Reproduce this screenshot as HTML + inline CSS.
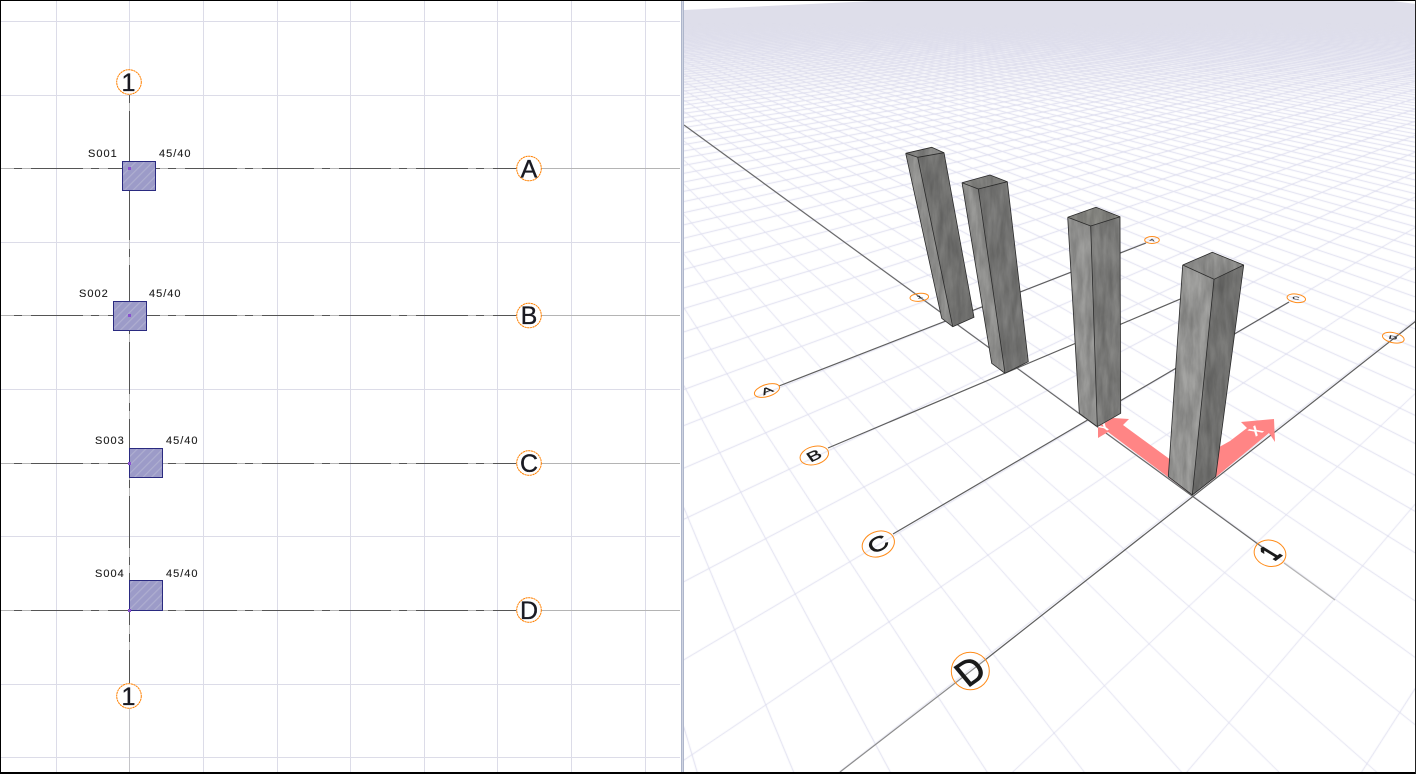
<!DOCTYPE html>
<html>
<head>
<meta charset="utf-8">
<style>
html,body{margin:0;padding:0;background:#fff;width:1416px;height:774px;overflow:hidden}
#c{position:absolute;left:684px;top:1px}
svg{position:absolute;left:0;top:0}
text{font-family:"Liberation Sans",sans-serif}
.t{font-size:11px;letter-spacing:1px;fill:#1c1c1c;stroke:#1c1c1c;stroke-width:.12}
.l{font-size:25px;fill:#1a1a22;stroke:#1a1a22;stroke-width:.35;text-anchor:middle}
.g{font-size:20px;fill:#1a1a1a;stroke:#1a1a1a;stroke-width:.5;text-anchor:middle}
</style>
</head>
<body>
<canvas id="c" width="731" height="771"></canvas>
<svg width="1416" height="774" viewBox="0 0 1416 774">
<defs>
<pattern id="h" width="6" height="6" patternUnits="userSpaceOnUse" patternTransform="rotate(45)">
<rect width="6" height="6" fill="#9c9bc8"/>
<rect width="1.2" height="6" fill="#aeaed0"/>
</pattern>
<filter id="n" x="0" y="0" width="1" height="1" color-interpolation-filters="sRGB">
<feTurbulence type="fractalNoise" baseFrequency=".16 .03" numOctaves="4" seed="5"/>
<feColorMatrix values=".35 0 0 0 .72 .35 0 0 0 .72 .35 0 0 0 .72 0 0 0 0 1"/>
<feComposite in2="SourceGraphic" operator="in"/>
<feBlend mode="multiply" in2="SourceGraphic"/>
</filter>
</defs>

<!-- top wedges of right view -->
<polygon points="684,0 895,0 684,10" fill="#fff"/>
<polygon points="1385,0 1416,0 1416,4" fill="#fff"/>

<!-- plan grid -->
<g stroke="#dcdce8" stroke-width="1" fill="none">
<path d="M56.5 0V772M129.5 0V772M203.5 0V772M277.5 0V772M350.5 0V772M424.5 0V772M497.5 0V772M571.5 0V772M645.5 0V772"/>
<path d="M0 21.5H680M0 95.5H680M0 168.5H680M0 242.5H680M0 315.5H680M0 389.5H680M0 463.5H680M0 536.5H680M0 610.5H680M0 684.5H680M0 757.5H680"/>
</g>

<!-- plan axes -->
<g fill="none" stroke-width="1">
<path d="M1 168.5H680M1 315.5H680M1 463.5H680M1 610.5H680" stroke="#b4b4b4"/>
<path d="M11 168.5H516M11 315.5H516M11 463.5H516M11 610.5H516" stroke="#555" stroke-dasharray="8 9 52 8" stroke-dashoffset="-3"/>
<path d="M129.5 683V772" stroke="#c4c4c8"/>
<path d="M129.5 95V683" stroke="#bbb"/>
<path d="M129.5 95V683" stroke="#555" stroke-dasharray="8 8 52 9" stroke-dashoffset="0"/>
</g>

<!-- columns -->
<g stroke="#2a2a80" stroke-width="1" fill="url(#h)">
<rect x="122.5" y="161.5" width="33" height="29"/>
<rect x="113.5" y="301.5" width="33" height="29"/>
<rect x="129.5" y="448.5" width="33" height="29"/>
<rect x="129.5" y="580.5" width="33" height="30"/>
</g>
<g fill="#8a50d0">
<rect x="128" y="167" width="3" height="3"/>
<rect x="128" y="314" width="3" height="3"/>
<rect x="128" y="462" width="3" height="3"/>
<rect x="128" y="609" width="3" height="3"/>
</g>

<!-- plan text -->
<text class="t" x="88" y="157">S001</text><text class="t" x="159" y="157">45/40</text>
<text class="t" x="79" y="297">S002</text><text class="t" x="149" y="297">45/40</text>
<text class="t" x="95" y="444">S003</text><text class="t" x="166" y="444">45/40</text>
<text class="t" x="95" y="577">S004</text><text class="t" x="166" y="577">45/40</text>

<!-- plan labels -->
<g fill="#fff" stroke="#ff8000" stroke-width="1" stroke-dasharray="2.2 .5">
<circle cx="129" cy="82" r="12.3" fill="#fff"/>
<circle cx="529" cy="168.5" r="12.3"/>
<circle cx="529" cy="315.5" r="12.3"/>
<circle cx="529" cy="463" r="12.3"/>
<circle cx="529" cy="610" r="12.3"/>
<circle cx="129" cy="696" r="12.3"/>
</g>
<text class="l" x="128.5" y="91">1</text>
<text class="l" x="529" y="177.5">A</text>
<text class="l" x="529" y="324">B</text>
<text class="l" x="529" y="472">C</text>
<text class="l" x="529" y="619">D</text>
<text class="l" x="128.5" y="705">1</text>

<!-- 3D axis lines -->
<g fill="none" stroke="#5e5e5e" stroke-width="1.2">
<path d="M684 125L1262 547" stroke="#6a6a6a"/>
<path d="M1284 563L1335 600" stroke="#b4b4b4"/>
<path d="M779 386L1146 243"/>
<path d="M828 448L1230 278"/>
<path d="M893 534L1289 302"/>
<path d="M985 660L1416 321"/>
<path d="M840 772L985 660" stroke="#8c8c8c"/>
</g>

<!-- arrows -->
<polygon points="1192,495 1108,432 1098,438 1098,427 1113,418 1129,419 1123,425 1175,463" fill="#ff8585"/>
<polygon points="1192,495 1205,455 1230,441 1247,428 1241,422 1274,419 1275,442 1269,433 1216,477" fill="#ff8585"/>
<text x="0" y="0" font-size="15" font-weight="bold" fill="#fff" text-anchor="middle" transform="matrix(.85 -.5 .75 .55 1108 430)">Y</text>
<text x="0" y="0" font-size="15" font-weight="bold" fill="#fff" text-anchor="middle" transform="matrix(.85 -.55 .85 .6 1260 434)">X</text>

<!-- pillars -->
<g filter="url(#n)">
<polygon points="905.7,153.3 917.7,157.3 952.7,326.7 941.7,318.3" fill="#9c9c9a"/>
<polygon points="917.7,157.3 944,152.7 974,317.3 952.7,326.7" fill="#7e7e7c"/>
<polygon points="905.7,153.3 931.7,147.3 944,152.7 917.7,157.3" fill="#8e8e8c"/>
</g>
<g filter="url(#n)">
<polygon points="962,182.7 978.3,189 1005,373.3 991.7,363.3" fill="#9c9c9a"/>
<polygon points="978.3,189 1007.3,181.7 1028.3,361.7 1005,373.3" fill="#80807e"/>
<polygon points="962,182.7 990,175 1007.3,181.7 978.3,189" fill="#92928f"/>
</g>
<g filter="url(#n)">
<polygon points="1067.7,217.3 1090.7,226 1097.3,426.7 1079.3,413.3" fill="#a0a09e"/>
<polygon points="1090.7,226 1120,216.7 1120.7,413.3 1097.3,426.7" fill="#868684"/>
<polygon points="1067.7,217.3 1096,207.3 1120,216.7 1090.7,226" fill="#94948f"/>
</g>
<g filter="url(#n)">
<polygon points="1182.7,265 1214,279.3 1192.3,495 1168.3,476.7" fill="#a4a4a2"/>
<polygon points="1214,279.3 1243.7,265 1215.7,476.7 1192.3,495" fill="#7c7c7a"/>
<polygon points="1182.7,265 1212.3,252.3 1243.7,265 1214,279.3" fill="#989896"/>
</g>
<g fill="none" stroke="#2a2a2a" stroke-width=".8" stroke-linejoin="round">
<path d="M905.7 153.3L917.7 157.3L944 152.7M917.7 157.3L952.7 326.7M905.7 153.3L931.7 147.3L944 152.7L974 317.3L952.7 326.7L941.7 318.3L905.7 153.3"/>
<path d="M962 182.7L978.3 189L1007.3 181.7M978.3 189L1005 373.3M962 182.7L990 175L1007.3 181.7L1028.3 361.7L1005 373.3L991.7 363.3L962 182.7"/>
<path d="M1067.7 217.3L1090.7 226L1120 216.7M1090.7 226L1097.3 426.7M1067.7 217.3L1096 207.3L1120 216.7L1120.7 413.3L1097.3 426.7L1079.3 413.3L1067.7 217.3"/>
<path d="M1182.7 265L1214 279.3L1243.7 265M1214 279.3L1192.3 495M1182.7 265L1212.3 252.3L1243.7 265L1215.7 476.7L1192.3 495L1168.3 476.7L1182.7 265"/>
</g>

<!-- 3D labels -->
<g fill="none" stroke="#ff8c1a" stroke-width="1">
<ellipse cx="767" cy="390.5" rx="13" ry="6" transform="rotate(-17 767 390.5)"/>
<ellipse cx="814.3" cy="455.5" rx="14.5" ry="9" transform="rotate(-15 814.3 455.5)"/>
<ellipse cx="878.3" cy="544" rx="16.5" ry="12.5" transform="rotate(-20 878.3 544)"/>
<ellipse cx="970.3" cy="671" rx="19" ry="18.7"/>
<ellipse cx="1270" cy="553.3" rx="16" ry="13" transform="rotate(15 1270 553.3)"/>
<ellipse cx="919.3" cy="297.3" rx="9.3" ry="4" transform="rotate(-5 919.3 297.3)"/>
<ellipse cx="1152" cy="240" rx="7.3" ry="3.5"/>
<ellipse cx="1296.3" cy="298.3" rx="9.3" ry="4.2" transform="rotate(8 1296.3 298.3)"/>
<ellipse cx="1393.3" cy="337.7" rx="11" ry="5" transform="rotate(12 1393.3 337.7)"/>
</g>
<text class="g" transform="matrix(.8 -.32 .28 .39 767 390.5)" y="7">A</text>
<text class="g" transform="matrix(.95 -.44 .42 .58 814 455.5)" y="7">B</text>
<text class="g" transform="matrix(1.2 -.7 .6 .83 878 544)" y="7">C</text>
<text class="g" transform="matrix(1.45 -1 1.16 1.39 970 671)" y="7">D</text>
<text class="g" font-weight="bold" transform="matrix(.75 -.55 1.25 .76 1270 553)" y="7">1</text>
<text class="g" transform="matrix(.5 -.1 .12 .18 919.5 297)" y="7">1</text>
<text class="g" transform="matrix(.38 .05 -.02 .16 1152 240)" y="7">A</text>
<text class="g" transform="matrix(.5 .06 -.03 .2 1296 298)" y="7">C</text>
<text class="g" transform="matrix(.6 .1 -.06 .24 1393 337.5)" y="7">D</text>

<!-- frame / splitter -->
<rect x="680" y="0" width="4" height="774" fill="#fff"/>
<rect x="681" y="0" width="3" height="774" fill="#aeb6cb"/>
<rect x="682" y="0" width="1" height="774" fill="#cfd4e2"/>
<rect x="0" y="0" width="1416" height="1" fill="#000"/>
<rect x="0" y="772" width="1416" height="2" fill="#000"/>
<rect x="0" y="0" width="1" height="774" fill="#000"/>
<rect x="1415" y="0" width="1" height="774" fill="#222"/>
</svg>
<script>
(function(){
var cv=document.getElementById('c'),g=cv.getContext('2d');
g.translate(-684,-1);
var a=0.0446,b=0.0811;
function P(X,Y){var w=1-a*X-b*Y;return [(1192-84.29*X-36.98*Y)/w,(495+2.364*X+3.325*Y)/w];}
g.strokeStyle='#dcdcee';g.lineWidth=1;g.beginPath();
var k,p,q,lim;
for(k=-700;k<=21;k++){
  lim=(1-a*k-0.02)/b;
  p=P(k,-420);q=P(k,lim);g.moveTo(p[0],p[1]);g.lineTo(q[0],q[1]);
}
for(k=-420;k<=11;k++){
  lim=(1-b*k-0.02)/a;
  p=P(-700,k);q=P(lim,k);g.moveTo(p[0],p[1]);g.lineTo(q[0],q[1]);
}
g.stroke();
var f=g.createLinearGradient(0,0,0,105);
f.addColorStop(0,'rgba(222,222,234,1)');
f.addColorStop(.22,'rgba(222,222,234,1)');
f.addColorStop(.5,'rgba(222,222,234,.4)');
f.addColorStop(1,'rgba(222,222,234,0)');
g.fillStyle=f;g.fillRect(684,0,732,105);
})();
</script>
</body>
</html>
